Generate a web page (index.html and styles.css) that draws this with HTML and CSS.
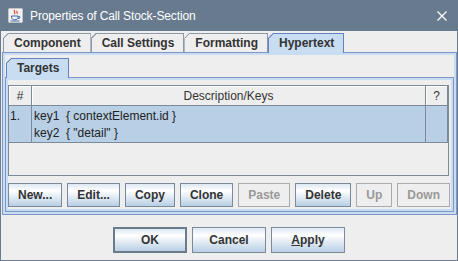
FILE: index.html
```html
<!DOCTYPE html>
<html lang="en">
<head>
  <meta charset="UTF-8" />
  <title>Properties of Call Stock-Section</title>
  <link rel="stylesheet" href="styles.css">
</head>
<body>
  <div class="window">
    <!-- Barra de título -->
    <div class="titlebar">
      <svg class="app-icon" viewBox="0 0 15 15">
        <rect x="0.5" y="0.5" width="14" height="14" rx="1" fill="#f2f2f2" stroke="#c4c4c4"/>
        <path d="M6.5 1.8c-1.2 1.4 1.4 2.4 0 4.4M9 2.8c-.9 1 1 1.8 0 3" stroke="#e2462b" stroke-width="1.2" fill="none"/>
        <path d="M3.5 8h6.5v1.2c0 1.6-1.4 2.6-3.2 2.6S3.5 10.8 3.5 9.2z" fill="none" stroke="#3d68a8"/>
        <path d="M10 8.4h1a1 1 0 0 1 0 2h-1" fill="none" stroke="#3d68a8"/>
        <path d="M2.5 13h9" stroke="#3d68a8"/>
      </svg>
      <span class="title">Properties of Call Stock-Section</span>
      <svg class="close" viewBox="0 0 10 10">
        <path d="M0.5 0.5L9.5 9.5M9.5 0.5L0.5 9.5" stroke="#fff" stroke-width="1.2"/>
      </svg>
    </div>

    <div class="frame">
      <!-- Pestañas principales -->
      <div class="tabs outer-tabs">
        <div class="tab">Component</div>
        <div class="tab">Call Settings</div>
        <div class="tab">Formatting</div>
        <div class="tab selected">Hypertext</div>
      </div>

      <div class="tab-panel outer-panel">
        <div class="tabs inner-tabs">
          <div class="tab selected">Targets</div>
        </div>

        <div class="tab-panel inner-panel">
          <!-- Tabla de destinos -->
          <div class="scroll">
            <table class="targets">
              <thead>
                <tr>
                  <th class="col-num">#</th>
                  <th class="col-desc">Description/Keys</th>
                  <th class="col-q">?</th>
                </tr>
              </thead>
              <tbody>
                <tr class="sel">
                  <td>1.</td>
                  <td class="keys">key1  { contextElement.id }<br>key2  { "detail" }</td>
                  <td></td>
                </tr>
              </tbody>
            </table>
          </div>

          <div class="row-buttons">
            <button class="btn">New...</button>
            <button class="btn">Edit...</button>
            <button class="btn">Copy</button>
            <button class="btn">Clone</button>
            <button class="btn" disabled>Paste</button>
            <button class="btn">Delete</button>
            <button class="btn" disabled>Up</button>
            <button class="btn" disabled>Down</button>
          </div>
        </div>
      </div>

      <!-- Botones del diálogo -->
      <div class="dialog-buttons">
        <button class="btn wide default">OK</button>
        <button class="btn wide">Cancel</button>
        <button class="btn wide"><u>A</u>pply</button>
      </div>
    </div>
  </div>
</body>
</html>
```

FILE: styles.css
```css
/* Reinicio básico */
* {
  margin: 0;
  padding: 0;
  box-sizing: border-box;
}
html, body {
  width: 458px;
  height: 261px;
  overflow: hidden;
  background: #eeeeee;
  font-family: "Liberation Sans", Arial, sans-serif;
  color: #333333;
}

.window {
  display: flex;
  flex-direction: column;
  height: 261px;
}

/* Barra de título */
.titlebar {
  height: 31px;
  flex: none;
  display: flex;
  align-items: center;
  padding: 0 11px 0 8px;
  background: #687a8e;
  color: #ffffff;
  font-size: 12px;
}
.app-icon {
  width: 15px;
  height: 15px;
  flex: none;
}
.title {
  flex: 1;
  margin-left: 7px;
  letter-spacing: -0.12px;
}
.close {
  width: 10px;
  height: 10px;
  flex: none;
}

/* Marco del diálogo */
.frame {
  flex: 1;
  display: flex;
  flex-direction: column;
  border: 1px solid #6b7b8f;
  border-top: 0;
}

/* Pestañas */
.tabs {
  display: flex;
  align-items: flex-end;
  flex: none;
}
.outer-tabs {
  height: 21px;
  padding-left: 2px;
}
.inner-tabs {
  height: 22px;
  padding-left: 1px;
}
.tab {
  height: 19px;
  padding: 0 9px 0 10px;
  border: 1px solid #8d99a8;
  border-bottom: 0;
  font-size: 12px;
  font-weight: bold;
  line-height: 18px;
  color: #333333;
  clip-path: polygon(5px 0, 100% 0, 100% 100%, 0 100%, 0 5px);
  background: linear-gradient(135deg, transparent 3.5px, #8d99a8 3.5px, #8d99a8 4.7px, #eeeeee 4.7px);
  background-origin: border-box;
}
.tab.selected {
  position: relative;
  height: 20px;
  margin-bottom: -1px;
  border-color: #6382bf;
  background: linear-gradient(135deg, transparent 3.5px, #6382bf 3.5px, #6382bf 4.7px, #c8ddf2 4.7px);
  background-origin: border-box;
}

/* Panel de contenido de las pestañas */
.tab-panel {
  border: 1px solid #7f97c6;
  box-shadow: inset 0 0 0 2px #c8ddf2;
  padding: 2px;
}
.outer-panel {
  height: 163px;
  flex: none;
  margin-left: 1px;
  display: flex;
  flex-direction: column;
}
.inner-panel {
  flex: 1;
  display: flex;
  flex-direction: column;
  padding: 7px 4px 4px 2px;
}

/* Tabla */
.scroll {
  height: 91px;
  flex: none;
  border: 1px solid #7a8a99;
  background: #eeeeee;
}
.targets {
  width: 100%;
  table-layout: fixed;
  border-collapse: separate;
  border-spacing: 0;
  font-size: 12px;
}
.targets th,
.targets td {
  border-right: 1px solid #7a8a99;
  border-bottom: 1px solid #7a8a99;
  font-weight: normal;
  color: #333333;
}
.targets th {
  height: 20px;
  text-align: center;
  background: #eeeeee;
  box-shadow: inset 1px 1px 0 #ffffff;
}
.col-num { width: 23px; }
.col-desc { width: 394px; }
.col-q { width: 22px; }
.targets td {
  height: 37px;
  vertical-align: top;
  padding: 2px 0 0 1px;
  line-height: 17px;
  background: #b8cfe5;
  color: #222222;
}
.targets td.keys {
  padding-left: 2px;
  white-space: pre;
}

/* Botones */
.btn {
  height: 24px;
  padding: 0 9px;
  border: 1px solid #7a8a99;
  background: linear-gradient(#dde8f3, #ffffff 30%, #b8cfe5);
  font-family: "Liberation Sans", Arial, sans-serif;
  font-size: 12px;
  font-weight: bold;
  color: #333333;
}
.btn:disabled {
  background: #eeeeee;
  border-color: #ababab;
  color: #999999;
}
.btn.wide {
  width: 74px;
  height: 26px;
}
.btn.default {
  border: 2px solid #6b7b8b;
}

.row-buttons {
  display: flex;
  gap: 5px;
  margin-top: 7px;
  flex: none;
}

.dialog-buttons {
  display: flex;
  justify-content: center;
  gap: 5px;
  margin-top: 12px;
}
```
